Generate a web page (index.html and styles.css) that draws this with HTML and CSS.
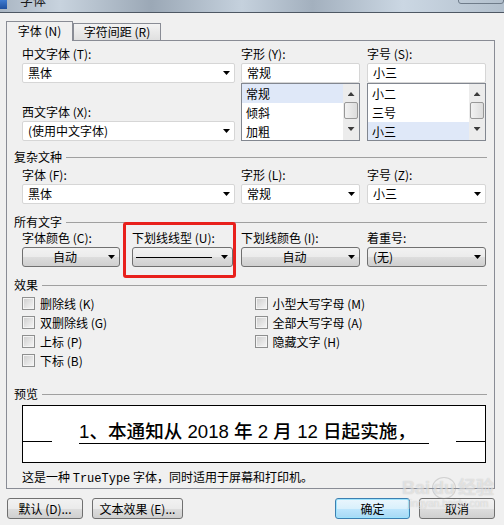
FILE: index.html
```html
<!DOCTYPE html>
<html lang="zh-CN">
<head>
    <meta charset="UTF-8">
    <title>字体</title>
    <link rel="stylesheet" href="styles.css">
</head>
<body>
    <div class="titlebar">
        <span class="app-icon"></span>
        <span class="title">字体</span>
        <span class="caption-btn"></span>
    </div>
    <div class="dialog">
        <div class="tabs">
            <div class="tab active">字体 (N)</div>
            <div class="tab">字符间距 (R)</div>
        </div>
        <div class="panel">
            <div class="fields top">
                <div class="field w213">
                    <label>中文字体 (T):</label>
                    <div class="combo"><span>黑体</span><span class="arrow"></span></div>
                    <label class="second">西文字体 (X):</label>
                    <div class="combo"><span>(使用中文字体)</span><span class="arrow"></span></div>
                </div>
                <div class="field w119 mr7">
                    <label>字形 (Y):</label>
                    <div class="edit">常规</div>
                    <div class="listbox">
                        <div class="items">
                            <div class="item sel">常规</div>
                            <div class="item">倾斜</div>
                            <div class="item">加粗</div>
                        </div>
                        <div class="scrollbar">
                            <span class="sb-up"></span>
                            <span class="sb-thumb"></span>
                            <span class="sb-down"></span>
                        </div>
                    </div>
                </div>
                <div class="field w119">
                    <label>字号 (S):</label>
                    <div class="edit">小三</div>
                    <div class="listbox">
                        <div class="items">
                            <div class="item">小二</div>
                            <div class="item">三号</div>
                            <div class="item sel">小三</div>
                        </div>
                        <div class="scrollbar">
                            <span class="sb-up"></span>
                            <span class="sb-thumb"></span>
                            <span class="sb-down"></span>
                        </div>
                    </div>
                </div>
            </div>

            <div class="group-head complex">复杂文种</div>
            <div class="fields row2">
                <div class="field w213">
                    <label>字体 (F):</label>
                    <div class="combo"><span>黑体</span><span class="arrow"></span></div>
                </div>
                <div class="field w119 mr7">
                    <label>字形 (L):</label>
                    <div class="combo"><span>常规</span><span class="arrow"></span></div>
                </div>
                <div class="field w119">
                    <label>字号 (Z):</label>
                    <div class="combo"><span>小三</span><span class="arrow"></span></div>
                </div>
            </div>

            <div class="group-head">所有文字</div>
            <div class="fields row3">
                <div class="field w98">
                    <label>字体颜色 (C):</label>
                    <div class="btn-combo"><span class="val center">自动</span><span class="arrow"></span></div>
                </div>
                <div class="field w101 marked">
                    <label>下划线线型 (U):</label>
                    <div class="btn-combo"><span class="line-sample"></span><span class="arrow"></span></div>
                    <div class="red-box"></div>
                </div>
                <div class="field w119 mr7">
                    <label>下划线颜色 (I):</label>
                    <div class="btn-combo"><span class="val center">自动</span><span class="arrow"></span></div>
                </div>
                <div class="field w119">
                    <label>着重号:</label>
                    <div class="btn-combo"><span class="val">(无)</span><span class="arrow"></span></div>
                </div>
            </div>

            <div class="group-head effects-head">效果</div>
            <div class="effects">
                <div class="check-col">
                    <div class="check"><span class="box"></span>删除线 (K)</div>
                    <div class="check"><span class="box"></span>双删除线 (G)</div>
                    <div class="check"><span class="box"></span>上标 (P)</div>
                    <div class="check"><span class="box"></span>下标 (B)</div>
                </div>
                <div class="check-col">
                    <div class="check"><span class="box"></span>小型大写字母 (M)</div>
                    <div class="check"><span class="box"></span>全部大写字母 (A)</div>
                    <div class="check"><span class="box"></span>隐藏文字 (H)</div>
                </div>
            </div>

            <div class="group-head preview-head">预览</div>
            <div class="preview">
                <span class="side-line"></span>
                <span class="sample"><span class="num">1</span>、本通知从 <span class="num">2018</span> 年 <span class="num">2</span> 月 <span class="num">12</span> 日起实施，</span>
                <span class="side-line"></span>
            </div>
            <p class="note">这是一种 <span class="mono">TrueType</span> 字体，同时适用于屏幕和打印机。</p>
        </div>

        <div class="buttons">
            <button class="btn w76">默认 (D)...</button>
            <button class="btn w91">文本效果 (E)...</button>
            <span class="spacer"></span>
            <button class="btn default w75">确定</button>
            <button class="btn w76">取消</button>
        </div>
    </div>
    <div class="watermark">
        <span class="wm-logo">Bai<span class="wm-du">du</span>经验</span>
        <span class="wm-url">jingyan.baidu.com</span>
    </div>
</body>
</html>
```

FILE: styles.css
```css
body {
    margin: 0;
    width: 504px;
    height: 525px;
    overflow: hidden;
    position: relative;
    background: #f0f0f0;
    font-family: "Noto Sans CJK SC", "Liberation Sans", sans-serif;
    font-size: 12px;
    color: #000;
}
.titlebar {
    height: 12px;
    border-bottom: 1px solid #4e5864;
    background: linear-gradient(90deg, #aab6c3 0%, #c8d3de 12%, #9ba8b6 30%, #c5d1dd 48%, #a3b0be 62%, #cbd7e3 80%, #b3c0cd 100%);
    display: flex;
    overflow: hidden;
}
.app-icon {
    width: 7px;
    height: 9px;
    background: linear-gradient(#3f7bd0, #1f4f9e);
}
.title {
    margin-left: 13px;
    margin-top: -8px;
    font-size: 13px;
    line-height: 16px;
    color: #1a1a1a;
}
.caption-btn {
    margin-left: auto;
    margin-top: -8px;
    width: 44px;
    height: 10px;
    border: 1px solid #6f7c8a;
    border-radius: 3px;
}
.dialog {
    padding: 8px 0 0 6px;
}
.tabs {
    display: flex;
    align-items: flex-end;
    height: 19px;
}
.tab {
    box-sizing: border-box;
    height: 17px;
    width: 88px;
    border: 1px solid #898c95;
    border-bottom: none;
    text-align: center;
    line-height: 16px;
    background: linear-gradient(#f3f3f3, #e0e0e0);
}
.tab.active {
    width: 67px;
    height: 20px;
    margin-bottom: -1px;
    background: #f0f0f0;
    position: relative;
    z-index: 1;
    line-height: 18px;
}
.panel {
    box-sizing: border-box;
    width: 489px;
    height: 449px;
    border: 1px solid #898c95;
    padding: 6px 7px 0 7px;
}
.fields {
    display: flex;
    margin-left: 8px;
}
.field {
    display: flex;
    flex-direction: column;
    position: relative;
}
.w213 { width: 213px; margin-right: 6px; }
.w119 { width: 119px; }
.mr7 { margin-right: 7px; }
.w98 { width: 98px; margin-right: 12px; }
.w101 { width: 101px; margin-right: 8px; }
label {
    display: block;
    height: 14px;
    line-height: 14px;
    margin-bottom: 2px;
    white-space: nowrap;
}
label.second {
    margin-top: 22px;
}
.combo, .edit {
    box-sizing: border-box;
    height: 20px;
    border: 1px solid #d6d6d6;
    border-radius: 2px;
    background: #fff;
    display: flex;
    align-items: center;
    justify-content: space-between;
    padding: 0 4px 0 5px;
    line-height: 18px;
}
.arrow {
    width: 7px;
    height: 4px;
    background: #000;
    clip-path: polygon(0 0, 100% 0, 50% 100%);
    flex-shrink: 0;
}
.listbox {
    box-sizing: border-box;
    height: 58px;
    border: 1px solid #828790;
    background: #fff;
    display: flex;
    overflow: hidden;
}
.items {
    flex: 1;
}
.item {
    height: 19px;
    line-height: 19px;
    padding-left: 4px;
}
.item.sel {
    background: #dfe8f8;
}
.scrollbar {
    width: 16px;
    background: #ececec;
    display: flex;
    flex-direction: column;
    align-items: center;
}
.sb-up, .sb-down {
    width: 7px;
    height: 4px;
    background: #3c3c3c;
}
.sb-up {
    margin-top: 8px;
    clip-path: polygon(50% 0, 100% 100%, 0 100%);
}
.sb-thumb {
    box-sizing: border-box;
    width: 14px;
    height: 17px;
    margin-top: 6px;
    border: 1px solid #989898;
    border-radius: 2px;
    background: linear-gradient(90deg, #f2f2f2, #dcdcdc);
}
.sb-down {
    margin-top: 8px;
    clip-path: polygon(0 0, 100% 0, 50% 100%);
}
.group-head {
    display: flex;
    align-items: center;
    height: 14px;
    line-height: 14px;
    margin-top: 11px;
}
.group-head::after {
    content: "";
    flex: 1;
    margin-left: 4px;
    border-top: 1px solid #a0a0a0;
}
.group-head.complex { margin-top: 9px; }
.row3 { margin-top: 2px; }
.row2 { margin-top: 4px; }
.btn-combo {
    box-sizing: border-box;
    height: 20px;
    border: 1px solid #707070;
    border-radius: 3px;
    background: linear-gradient(#f2f2f2 0%, #ebebeb 50%, #dddddd 51%, #cfcfcf 100%);
    display: flex;
    align-items: center;
    padding: 0 4px 0 5px;
}
.val {
    flex: 1;
    line-height: 18px;
}
.val.center {
    text-align: center;
    padding-right: 6px;
}
.line-sample {
    flex: 1;
    height: 1px;
    background: #000;
    margin: 0 9px 0 -2px;
}
.red-box {
    position: absolute;
    left: -9px;
    top: -9px;
    right: -3px;
    bottom: -11px;
    border: 3px solid #e8201c;
    border-radius: 3px;
}
.effects {
    display: flex;
    margin: 2px 0 0 8px;
}
.check-col {
    width: 233px;
}
.check {
    display: flex;
    align-items: center;
    height: 19px;
    white-space: nowrap;
}
.box {
    box-sizing: border-box;
    width: 13px;
    height: 13px;
    margin-right: 5px;
    border: 1px solid #8e8f8f;
    box-shadow: inset 0 0 0 1px #f4f4f4;
    background: linear-gradient(135deg, #cdcdcd, #f7f7f7);
}
.group-head.preview-head { margin-top: 17px; }
.preview {
    box-sizing: border-box;
    width: 464px;
    height: 58px;
    margin: 4px 0 0 8px;
    border: 1px solid #000;
    background: #fff;
    display: flex;
    align-items: flex-end;
    justify-content: space-between;
}
.side-line {
    width: 29px;
    height: 1px;
    background: #000;
    margin-bottom: 20px;
}
.sample {
    font-family: "Liberation Sans", "Noto Sans CJK SC", sans-serif;
    font-size: 18.6px;
    font-weight: 500;
    line-height: 22px;
    border-bottom: 1px solid #000;
    margin-bottom: 18px;
    padding-right: 13px;
    white-space: nowrap;
}
.sample .num {
    font-weight: normal;
}
.note {
    margin: 7px 0 0 8px;
    height: 14px;
    line-height: 14px;
    white-space: nowrap;
}
.mono {
    font-family: "Liberation Mono", monospace;
    font-size: 12px;
}
.buttons {
    display: flex;
    margin-top: 9px;
    padding-left: 1px;
}
.btn {
    box-sizing: border-box;
    height: 21px;
    padding: 0;
    border: 1px solid #707070;
    border-radius: 3px;
    background: linear-gradient(#f2f2f2 0%, #ebebeb 50%, #dddddd 51%, #cfcfcf 100%);
    font-family: "Noto Sans CJK SC", sans-serif;
    font-size: 12px;
    line-height: 18px;
    color: #000;
    margin-right: 9px;
}
.btn.default {
    border-color: #3c7fb1;
    background: linear-gradient(#eaf6fd 0%, #d9f0fc 50%, #bee6fd 51%, #a7d9f5 100%);
    box-shadow: inset 0 0 0 1px #9ee4fd;
}
.w76 { width: 76px; }
.w91 { width: 91px; }
.w75 { width: 75px; }
.spacer { flex: 1; }
.watermark {
    position: absolute;
    left: 402px;
    top: 478px;
    display: flex;
    flex-direction: column;
    align-items: center;
    pointer-events: none;
    color: rgba(255, 255, 255, 0.5);
    text-shadow: 0 0 1px rgba(120, 120, 120, 0.4);
}
.wm-logo {
    font-family: "Liberation Sans", "Noto Sans CJK SC", sans-serif;
    font-size: 18px;
    font-weight: bold;
    line-height: 20px;
}
.wm-du {
    border: 1px solid rgba(150, 150, 150, 0.35);
    border-radius: 50%;
    margin: 0 2px;
}
.wm-url {
    font-family: "Liberation Sans", sans-serif;
    font-size: 10px;
    line-height: 12px;
}
```
